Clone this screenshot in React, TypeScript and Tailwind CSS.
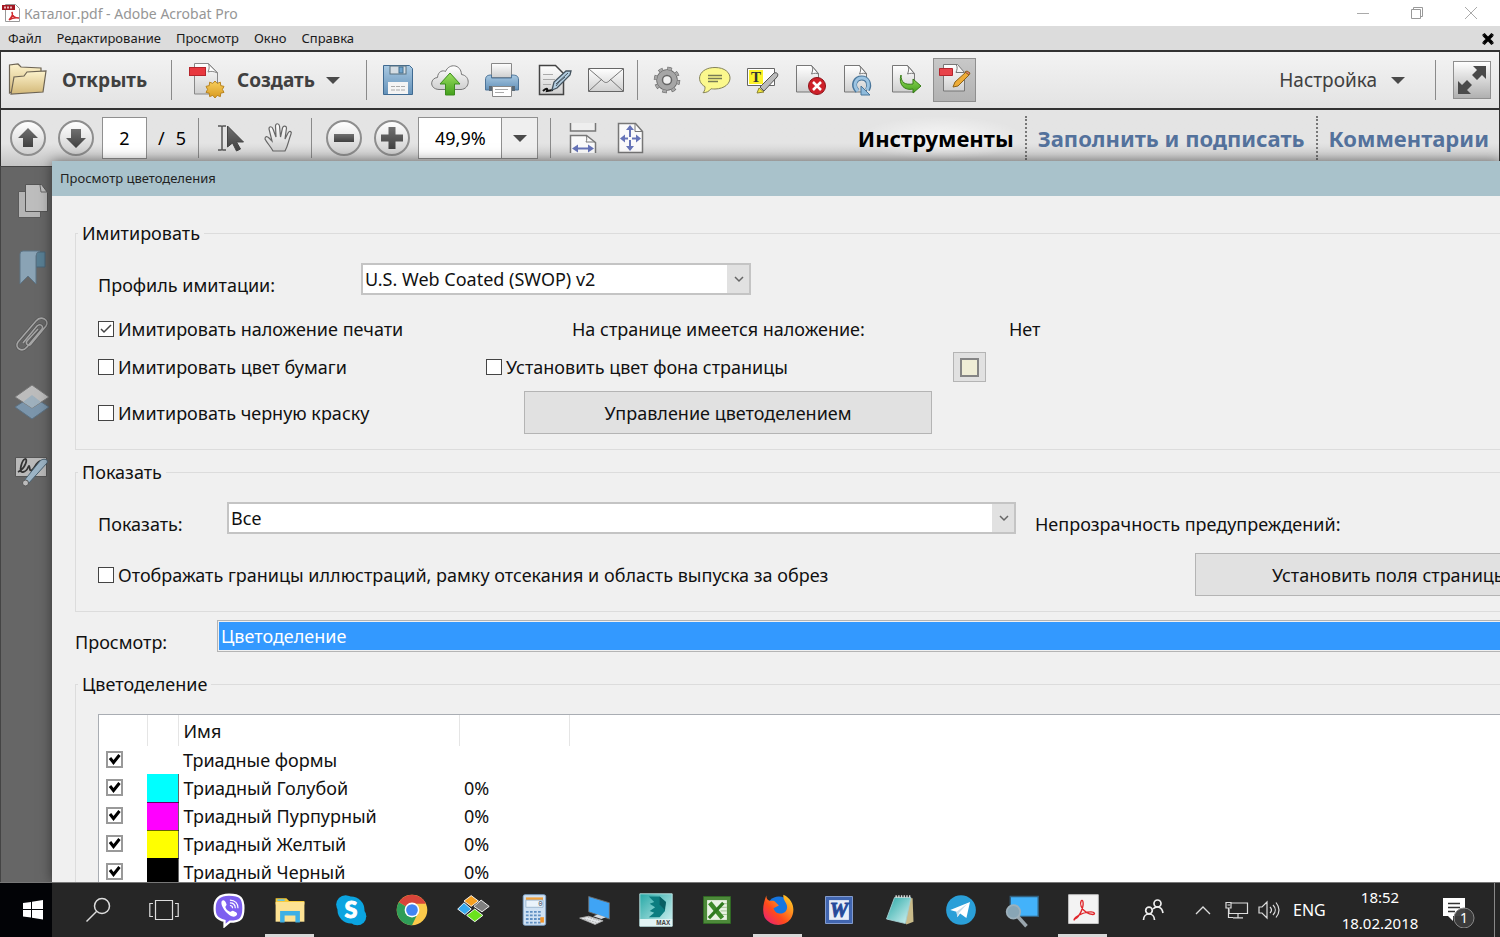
import React, { useState } from 'react';
import clsx from 'clsx';

const menuItems = ['Файл', 'Редактирование', 'Просмотр', 'Окно', 'Справка'];

const plates = [
  { name: 'Триадные формы', color: '', value: '' },
  { name: 'Триадный Голубой', color: 'bg-[#00ffff]', value: '0%' },
  { name: 'Триадный Пурпурный', color: 'bg-[#ff00ff]', value: '0%' },
  { name: 'Триадный Желтый', color: 'bg-[#ffff00]', value: '0%' },
  { name: 'Триадный Черный', color: 'bg-black', value: '0%' }
];

interface IconProps {
  size?: number;
  children: React.ReactNode;
}

// Every icon is drawn on a 40x40 grid
function Icon({ size = 40, children }: IconProps) {
  return (
    <svg width={size} height={size} viewBox="0 0 40 40" fill="none" className="shrink-0" aria-hidden="true">
      {children}
    </svg>
  );
}

function Gradients() {
  return (
    <svg width="0" height="0" className="absolute" aria-hidden="true">
      <defs>
        <linearGradient id="paper" x1="0" y1="0" x2="0" y2="1">
          <stop offset="0" stopColor="#ffffff" />
          <stop offset="1" stopColor="#cfcfcf" />
        </linearGradient>
        <linearGradient id="folder" x1="0" y1="0" x2="0" y2="1">
          <stop offset="0" stopColor="#fdf3cd" />
          <stop offset="1" stopColor="#d3b878" />
        </linearGradient>
        <linearGradient id="blue" x1="0" y1="0" x2="0" y2="1">
          <stop offset="0" stopColor="#a9c9e2" />
          <stop offset="1" stopColor="#6391b9" />
        </linearGradient>
        <linearGradient id="green" x1="0" y1="0" x2="0" y2="1">
          <stop offset="0" stopColor="#9be060" />
          <stop offset="1" stopColor="#44a01c" />
        </linearGradient>
        <linearGradient id="dark" x1="0" y1="0" x2="0" y2="1">
          <stop offset="0" stopColor="#707070" />
          <stop offset="1" stopColor="#404040" />
        </linearGradient>
        <linearGradient id="gold" x1="0" y1="0" x2="0" y2="1">
          <stop offset="0" stopColor="#f8cf5c" />
          <stop offset="1" stopColor="#d89a20" />
        </linearGradient>
        <linearGradient id="fire" x1="0" y1="1" x2="1" y2="0">
          <stop offset="0" stopColor="#e3168c" />
          <stop offset="0.4" stopColor="#ff4a1c" />
          <stop offset="1" stopColor="#ffe226" />
        </linearGradient>
        <linearGradient id="teal" x1="0" y1="0" x2="1" y2="1">
          <stop offset="0" stopColor="#26a8a6" />
          <stop offset="1" stopColor="#d8f4f4" />
        </linearGradient>
      </defs>
    </svg>
  );
}

function PageShape() {
  return (
    <>
      <path d="M5.500 5.500h15l7 8v18.500h-22z" fill="url(#paper)" stroke="#777" />
      <path d="M20.500 5.500c2 3 1 6 0 8.500 3-1 5-1 7 0z" fill="#fff" stroke="#777" />
    </>
  );
}

const FolderIcon = () => (
  <Icon>
    <path d="M1.500 33V5L10 4l3 3 20 1v8z" fill="url(#folder)" stroke="#6d6454" strokeWidth="1.200" />
    <path d="M3 34 6 17l10-1 3-4 19-1-3 21z" fill="url(#folder)" stroke="#6d6454" strokeWidth="1.200" />
  </Icon>
);

const CreateIcon = () => (
  <Icon>
    <path d="M8.500 3.500h14l9 9v21.500h-23z" fill="url(#paper)" stroke="#888" />
    <path d="M22 3.500c2 3 1 6 0 8.500 3-1 5-1 9.500 1z" fill="#fff" stroke="#888" />
    <rect x="3.500" y="7.500" width="16" height="8" fill="#e8383f" stroke="#b5262d" />
    <path d="m29 21 2.200 2.400 3.200-1.200.3 3.400 3.300.8-1.600 3 1.600 3-3.300.8-.3 3.400-3.200-1.200L29 38l-2.200-2.600-3.200 1.200-.3-3.400-3.300-.8 1.600-3-1.600-3 3.300-.8.3-3.400 3.200 1.200z" fill="url(#gold)" stroke="#b98522" />
  </Icon>
);

const SaveIcon = () => (
  <Icon>
    <path d="M5.500 5.500h26l3 3v26h-29z" fill="url(#blue)" stroke="#3f6a91" />
    <rect x="12" y="6" width="16" height="8" fill="#d5dde3" stroke="#59707f" />
    <rect x="21" y="7" width="4" height="6" fill="#6fa4ce" stroke="#44708f" />
    <rect x="10" y="22" width="20" height="12" fill="#f4f4f4" />
    <path d="M13 26.500h14M13 30h14" stroke="#aaa" strokeDasharray="4 1" />
  </Icon>
);

const CloudIcon = () => (
  <Icon>
    <path d="M9 29.500C-1 29 0 18 7.500 17.500 8 11 13 10 15.500 11.500 19 3 31 4 31.500 14.500 41 16 40 29 31 29.500z" fill="url(#paper)" stroke="#777" />
    <path d="m20 13 10 11h-5.500v11h-9V24H10z" fill="url(#green)" stroke="#3c8c1e" />
  </Icon>
);

const PrinterIcon = () => (
  <Icon>
    <path d="M9.500 3.500h20v14h-20z" fill="url(#paper)" stroke="#888" />
    <path d="M3.500 20c0-4 2-5 6-5v3h20v-3c5 0 7 1 7 5v10h-33z" fill="url(#blue)" stroke="#4e7599" />
    <path d="M7 26h26v5H7z" fill="#5b6a76" />
    <path d="M10.500 26.500h19v10h-19z" fill="#fff" stroke="#888" />
    <path d="M13 29.500h13M13 32.500h9" stroke="#aaa" />
  </Icon>
);

const SignIcon = () => (
  <Icon>
    <path d="M5.500 5.500h16l8 8v21h-24z" fill="url(#paper)" stroke="#444" strokeWidth="1.500" />
    <path d="M9 14.500h10M9 19.500h12M9 24.500h8" stroke="#aaa" />
    <path d="M9 31c3-3 5-3 4 0l6-1" stroke="#111" strokeWidth="2" />
    <path d="m18 30 2-8L32 11h5l-1 4-13 13z" fill="#b5cfe2" stroke="#44535e" strokeWidth="1.300" />
    <path d="m22 24 12-11M22 26l3-4 6-5" stroke="#44535e" />
  </Icon>
);

const MailIcon = () => (
  <Icon>
    <path d="M2.500 8.500h35v23h-35z" fill="url(#paper)" stroke="#666" />
    <path d="m3 31 13-12M37 31 24 19M3 9l14 12c2 2 4 2 6 0L37 9" stroke="#777" />
  </Icon>
);

const GearIcon = () => (
  <Icon>
    <circle cx="20" cy="20" r="11.500" stroke="#666" strokeWidth="3.500" strokeDasharray="4.500 4.530" />
    <circle cx="20" cy="20" r="8" stroke="#666" strokeWidth="5.500" />
    <circle cx="20" cy="20" r="11.500" stroke="#a6a6a6" strokeWidth="2.500" strokeDasharray="3.500 5.530" strokeDashoffset="-.5" />
    <circle cx="20" cy="20" r="7.500" stroke="#a6a6a6" strokeWidth="5" />
    <circle cx="20" cy="20" r="4.500" fill="#f0f0f0" stroke="#666" strokeWidth="1.500" />
  </Icon>
);

const CommentIcon = () => (
  <Icon>
    <path d="M20 7.500c20 0 20 21 0 21.500-2 0-3 0-4-.3-2 3-5 4-8 4 2-2 2-4 2-6C0 21 4 7.500 20 7.500z" fill="#fbf88d" stroke="#85835a" />
    <path d="M13 15.500h14M13 18.500h14M13 21.500h10" stroke="#777b55" strokeWidth="1.300" />
  </Icon>
);

const HighlightIcon = () => (
  <Icon>
    <path d="M4.500 8.500h27v17h-27z" fill="#fff" stroke="#666" />
    <path d="M6 10h14v14H6z" fill="#fdf32a" />
    <text x="13" y="22" textAnchor="middle" fontSize="15" fontWeight="bold" fontFamily="Liberation Serif, serif" fill="#333">T</text>
    <path d="M17 27 31 13c3-1 5 1 3 4L21 31z" fill="#bbb" stroke="#555" />
    <path d="m16 28 5 4-7 1z" fill="#f2e63c" stroke="#8b8432" />
  </Icon>
);

const DeletePageIcon = () => (
  <Icon>
    <PageShape />
    <circle cx="26" cy="26" r="8.500" fill="#ce2029" stroke="#8e1218" />
    <path d="m22 22 8 8m0-8-8 8" stroke="#fff" strokeWidth="2.500" />
  </Icon>
);

const RotatePageIcon = () => (
  <Icon>
    <PageShape />
    <path d="M18.500 31c-6-6-2-13 4-13s9 6 6 12" stroke="#49769b" strokeWidth="5" />
    <path d="M22 26v9h9z" fill="#8fbbdc" stroke="#49769b" />
    <path d="M19 31c-6-6-2-13 4-13s8 6 5 12" stroke="#9cc4e2" strokeWidth="3" />
  </Icon>
);

const ExtractPageIcon = () => (
  <Icon>
    <PageShape />
    <path d="M14 15c0 8 4 10 12 9v-5l8 7-8 7v-4c-8 2-15-4-12-14z" fill="url(#green)" stroke="#377d17" />
  </Icon>
);

const EditPdfIcon = () => (
  <Icon>
    <path d="M8.500 4.500h14l7 8v18.500h-21z" fill="url(#paper)" stroke="#777" />
    <path d="M21 4.500c2 3 1 5 0 8h8" stroke="#777" />
    <path d="M4.500 8.500h13v7h-13z" fill="#e8434a" stroke="#b5262d" />
    <path d="m18 27 2-5L31 12l3 3-11 11z" fill="#eeac36" stroke="#8c6218" />
    <path d="m30 12 2-1 3 2-1 2z" fill="#e77a72" stroke="#8c6218" />
  </Icon>
);

const CursorIcon = () => (
  <Icon>
    <path d="M7 8h3q1 0 1 1V31q0 1-1 1H7M15 8h-3q-1 0-1 1M15 32h-3q-1 0-1-1" stroke="#555" strokeWidth="1.500" />
    <path d="M16.500 8v21l5-4 4 8 4-2-4-7h7z" fill="url(#dark)" stroke="#444" />
  </Icon>
);

const HandIcon = () => (
  <Icon>
    <path d="M14 33c-2-4-6-8-8-12 0-3 2-3 4-1l3 3-3-12c0-3 3-3 4 0l3 8-.5-11c0-3 3.500-3 4 0l1 11 2-9c1-3 4-2 4 0l-1.500 11 3-6c2-3 4-1 3 1-3 8-3 12-6 17z" fill="url(#paper)" stroke="#666" strokeWidth="1.200" />
  </Icon>
);

const FitWidthIcon = () => (
  <Icon>
    <path d="M7.500 5v8h25V5" fill="#eee" stroke="#777" strokeWidth="1.500" />
    <path d="M7.500 35V17.500h16l9 7V35" fill="#fafafa" stroke="#777" strokeWidth="1.500" />
    <path d="M23 17c1 3 1 5 0 7h9" stroke="#777" />
    <path d="M12 30.500h16" stroke="#6674b8" strokeWidth="2" />
    <path d="m9 30.500 6-4v8zm22 0-6-4v8z" fill="#6674b8" />
  </Icon>
);

const FitPageIcon = () => (
  <Icon>
    <path d="M7.500 5.500h17l7 8v21h-24z" fill="#fafafa" stroke="#777" strokeWidth="1.500" />
    <path d="M24 5.500v8h7" stroke="#777" />
    <path d="M19 11v18M12 20.500h15" stroke="#6674b8" strokeWidth="2" />
    <path d="m19 7 4 5h-8zm0 26 4-5h-8zM9 20.500l5-4v8zm21 0-5-4v8z" fill="#6674b8" />
    <path d="M17 19h4v3h-4z" fill="#fafafa" />
  </Icon>
);

const PagesIcon = () => (
  <Icon>
    <path d="M6.500 10.500h22v26h-22z" fill="#b4b4b4" stroke="#5a5a5a" />
    <path d="M13.500 3.500h16l6 8v19h-22z" fill="#bdbdbd" stroke="#555" />
    <path d="m28 4 1 7h6" stroke="#666" />
  </Icon>
);

const BookmarkIcon = () => (
  <Icon>
    <path d="M24 4h9v15h-9z" fill="#587e93" stroke="#496577" />
    <path d="M8 36V6q0-3 3-3h17q-4 1-4 5v28l-8-8z" fill="#8aa3b5" stroke="#5d7485" />
  </Icon>
);

const ClipIcon = () => (
  <Icon>
    <path d="M11 28 25 11c3-3 7 0 5 3L15 32c-5 6-13 1-9-5L24 6c5-6 14-1 10 5L19 29c-2 3-6 0-4-3l11-12" stroke="#555" strokeWidth="2.800" />
    <path d="M11 28 25 11c3-3 7 0 5 3L15 32c-5 6-13 1-9-5L24 6c5-6 14-1 10 5L19 29c-2 3-6 0-4-3l11-12" stroke="#a5a5a5" strokeWidth="1.500" />
  </Icon>
);

const LayersIcon = () => (
  <Icon>
    <path d="m20 14 17 11-17 12L3 25z" fill="#7b95ab" stroke="#5b7183" />
    <path d="m20 3 17 12-17 11L3 15z" fill="#bcbcbc" stroke="#777" />
    <path d="m20 13 9 7-9 6-9-6z" fill="#9eb0bd" />
  </Icon>
);

const SignaturePanelIcon = () => (
  <Icon>
    <path d="M3.500 8.500h31v19h-31z" fill="#b9b9b9" stroke="#555" />
    <path d="M6 23c8-4 10-14 7-13s-7 14-2 13 5-6 6-6 0 6 3 4 4-8 9-9" stroke="#333" strokeWidth="1.800" />
    <path d="m11 33 17-21c3-3 9-2 7 2L16 35z" fill="#9cb4c5" stroke="#49606f" />
    <circle cx="13.500" cy="34" r="3" fill="#bbb" stroke="#555" />
  </Icon>
);

const AcrobatDocIcon = () => (
  <svg width="20" height="20" viewBox="0 0 20 20" fill="none" className="shrink-0" aria-hidden="true">
    <path d="M4.500 1.500h10l4 4v13h-14z" fill="#fff" stroke="#999" />
    <path d="M1 2h13v5H1z" fill="#a31621" />
    <path d="M3 4.500h8" stroke="#e9b8bb" strokeWidth="2" strokeDasharray="2 1" />
    <path d="M8 17c3-3 4-6 3-8 0 4 2 6 7 6-4-1-7 0-10 2z" stroke="#d02a2e" strokeWidth="1.500" />
  </svg>
);

function CheckBox({ id, checked = false, bold = false, label }: { id: string; checked?: boolean; bold?: boolean; label?: string }) {
  const [on, setOn] = useState(checked);
  return (
    <span className="relative inline-flex shrink-0">
      <input
        id={id}
        type="checkbox"
        aria-label={label}
        checked={on}
        onChange={() => setOn(!on)}
        className={clsx('appearance-none bg-white', bold ? 'w-[17px] h-[17px] border-2 border-[#999]' : 'w-4 h-4 border border-[#444]')}
      />
      {on && (
        <svg width="16" height="16" viewBox="0 0 16 16" fill="none" className="absolute inset-0 pointer-events-none" aria-hidden="true">
          <path d={bold ? 'm4 7 3.500 4.500L13.500 4' : 'm3 8 3 3 7-7'} stroke={bold ? '#000' : '#444'} strokeWidth={bold ? 3 : 1.5} />
        </svg>
      )}
    </span>
  );
}

function LabeledCheck({ id, label, checked, className }: { id: string; label: string; checked?: boolean; className?: string }) {
  return (
    <span className={clsx('flex items-center gap-1 shrink-0', className)}>
      <CheckBox id={id} checked={checked} />
      <label htmlFor={id}>{label}</label>
    </span>
  );
}

function Combo({ id, value, className }: { id: string; value: string; className: string }) {
  return (
    <span className={clsx('flex relative shrink-0 h-8', className)}>
      <select id={id} className="appearance-none w-full bg-white border-2 border-[#c4c4c4] px-0.5 outline-none">
        <option>{value}</option>
      </select>
      <svg viewBox="0 0 22 28" className="absolute right-0.5 top-0.5 w-[22px] h-7 bg-[#e1e1e1] pointer-events-none" fill="none" aria-hidden="true">
        <path d="m8 12 4 4 4-4" stroke="#666" strokeWidth="1.500" />
      </svg>
    </span>
  );
}

function ToolButton({ title, className, children }: { title: string; className?: string; children: React.ReactNode }) {
  return (
    <button title={title} className={clsx('flex items-center justify-center shrink-0', className)}>
      {children}
    </button>
  );
}

const Separator = ({ className }: { className?: string }) => <div className={clsx('w-px h-10 bg-[#8a8a8a] shrink-0', className)} />;

const Caret = () => <span className="border-x-[7px] border-t-[7px] border-x-transparent border-t-[#4a4a4a]" />;

function TitleBar() {
  return (
    <header className="flex items-center h-[26px] bg-white text-[#969696] text-sm shrink-0">
      <div className="pl-px">
        <AcrobatDocIcon />
      </div>
      <h1 className="pl-[3px] pt-px grow">Каталог.pdf - Adobe Acrobat Pro</h1>
      <svg width="14" height="14" viewBox="0 0 14 14" stroke="#aaa" fill="none" aria-hidden="true">
        <path d="M1 7.500h12" />
      </svg>
      <svg width="14" height="14" viewBox="0 0 14 14" stroke="#999" fill="none" className="mx-10" aria-hidden="true">
        <path d="M1.500 3.500h9v9h-9zM3.500 3.500v-2h9v9h-2" />
      </svg>
      <svg width="14" height="14" viewBox="0 0 14 14" stroke="#aaa" fill="none" className="mr-[22px]" aria-hidden="true">
        <path d="m1 1 12 12M13 1 1 13" />
      </svg>
    </header>
  );
}

function MenuBar() {
  return (
    <nav className="flex items-center h-6 bg-[#dcdcdc] text-[13px] text-[#1a1a1a] pt-0.5 px-2 gap-[15px] shrink-0">
      {menuItems.map((item) => (
        <button key={item}>{item}</button>
      ))}
      <button title="Закрыть" className="ml-auto -mr-[3px]">
        <svg width="14" height="14" viewBox="0 0 14 14" aria-hidden="true">
          <path d="m3 3 8 8m0-8-8 8" stroke="#000" strokeWidth="3.500" />
          <path d="M1.500 3.500 4 1.500M10 1.500l2.500 2M1.500 10.500l2.500 2M10 12.500l2.500-2" stroke="#000" strokeWidth="1.500" />
        </svg>
      </button>
    </nav>
  );
}

function MainToolbar() {
  return (
    <div className="flex items-center h-[58px] border-t-2 border-x border-[#333] bg-linear-to-b from-[#f3f3f3] to-[#e3e3e3] shrink-0 text-[19px] text-[#404040]">
      <button className="flex items-center pl-[7px] w-[170px] shrink-0 font-bold gap-[14px]">
        <FolderIcon />
        Открыть
      </button>
      <Separator />
      <button className="flex items-center pl-3.5 w-[194px] shrink-0 font-bold gap-[11px]">
        <CreateIcon />
        Создать
        <Caret />
      </button>
      <Separator className="mr-[5px]" />
      <ToolButton title="Сохранить" className="w-[52px]"><SaveIcon /></ToolButton>
      <ToolButton title="Отправить в облако" className="w-[52px]"><CloudIcon /></ToolButton>
      <ToolButton title="Печать" className="w-[52px]"><PrinterIcon /></ToolButton>
      <ToolButton title="Подписать" className="w-[52px]"><SignIcon /></ToolButton>
      <ToolButton title="Почта" className="w-[52px]"><MailIcon /></ToolButton>
      <Separator className="mx-[5px]" />
      <ToolButton title="Параметры" className="w-12"><GearIcon /></ToolButton>
      <ToolButton title="Заметка" className="w-12"><CommentIcon /></ToolButton>
      <ToolButton title="Выделить текст" className="w-12"><HighlightIcon /></ToolButton>
      <ToolButton title="Удалить страницу" className="w-12"><DeletePageIcon /></ToolButton>
      <ToolButton title="Повернуть страницу" className="w-12"><RotatePageIcon /></ToolButton>
      <ToolButton title="Извлечь страницу" className="w-12"><ExtractPageIcon /></ToolButton>
      <ToolButton title="Редактировать" className="w-[43px] h-11 ml-0.5 bg-linear-to-b from-[#c8c8c8] to-[#b2b2b2] border border-[#8f8f8f]"><EditPdfIcon /></ToolButton>
      <button className="flex items-center gap-3.5 ml-auto mr-[30px] shrink-0">
        Настройка
        <Caret />
      </button>
      <Separator />
      <ToolButton title="Во весь экран" className="ml-[17px] mr-2 w-[38px] h-[38px] border border-[#8f8f8f] bg-linear-to-b from-white to-[#b0b0b0]">
        <svg width="34" height="34" viewBox="0 0 34 34" fill="#4a4a4a" aria-hidden="true">
          <path d="M31 3v13l-4-4-5 5-5-5 5-5-4-4zM3 31V18l4 4 5-5 5 5-5 5 4 4z" />
        </svg>
      </ToolButton>
    </div>
  );
}

function RoundButton({ title, path }: { title: string; path: string }) {
  return (
    <button title={title} className="flex items-center justify-center w-9 h-9 rounded-full border-2 border-[#8e8e8e] bg-linear-to-b from-white to-[#cfcfcf] shrink-0">
      <svg width="32" height="32" viewBox="0 0 32 32" fill="url(#dark)" aria-hidden="true">
        <path d={path} />
      </svg>
    </button>
  );
}

function PageToolbar() {
  return (
    <div className="flex items-center h-[58px] border-t-2 border-x border-[#333] bg-linear-to-b from-[#e4e4e4] from-60% to-[#c4c4c4] shrink-0 text-lg">
      <div className="flex items-center pl-[9px] gap-3 shrink-0">
        <RoundButton title="Предыдущая страница" path="m16 6 10 10h-5v9H11v-9H6z" />
        <RoundButton title="Следующая страница" path="m16 26 10-10h-5V7H11v9H6z" />
      </div>
      <input aria-label="Страница" defaultValue="2" className="ml-2 w-[45px] h-[42px] bg-white border border-[#909090] text-center shrink-0" />
      <span className="flex gap-[11px] w-[51px] pl-[11px] shrink-0">
        <span>/</span>
        <span>5</span>
      </span>
      <Separator className="mr-3" />
      <ToolButton title="Выделение" className="w-10"><CursorIcon /></ToolButton>
      <ToolButton title="Рука" className="ml-2 w-10"><HandIcon /></ToolButton>
      <Separator className="ml-3 mr-[14px]" />
      <div className="flex items-center gap-3 shrink-0">
        <RoundButton title="Уменьшить" path="M6 12h20v8H6z" />
        <RoundButton title="Увеличить" path="M12.500 5h7v7.500H27v7h-7.500V27h-7v-7.500H5v-7h7.500z" />
      </div>
      <div className="relative flex ml-2 shrink-0">
        <select aria-label="Масштаб" className="appearance-none w-[120px] h-[42px] bg-white border border-[#909090] pl-4">
          <option>49,9%</option>
        </select>
        <span className="absolute right-px inset-y-px w-9 flex items-center justify-center border-l border-[#909090] bg-[#efefef] pointer-events-none">
          <Caret />
        </span>
      </div>
      <Separator className="mx-3" />
      <ToolButton title="По ширине" className="w-10"><FitWidthIcon /></ToolButton>
      <ToolButton title="По странице" className="ml-2 w-10"><FitPageIcon /></ToolButton>
      <div className="flex items-center ml-auto pr-[10px] text-[22px] font-bold text-[#54729c] shrink-0">
        <button className="pr-[11px] h-11 text-black bg-radial from-white/70 to-transparent to-70%">Инструменты</button>
        <button className="px-[11px] h-11 border-l-2 border-dotted border-[#777]">Заполнить и подписать</button>
        <button className="pl-[11px] h-11 border-l-2 border-dotted border-[#777]">Комментарии</button>
      </div>
    </div>
  );
}

function SidePanel() {
  return (
    <aside className="flex flex-col w-[52px] bg-[#666] border-t border-l border-[#444] shrink-0 pl-[11px]">
      <ToolButton title="Страницы" className="w-10 h-[67px]"><PagesIcon /></ToolButton>
      <ToolButton title="Закладки" className="w-10 h-[67px]"><BookmarkIcon /></ToolButton>
      <ToolButton title="Вложения" className="w-10 h-[67px]"><ClipIcon /></ToolButton>
      <ToolButton title="Слои" className="w-10 h-[67px]"><LayersIcon /></ToolButton>
      <ToolButton title="Подписи" className="w-10 h-[67px]"><SignaturePanelIcon /></ToolButton>
    </aside>
  );
}

function SimulateGroup() {
  return (
    <fieldset className="border border-r-0 border-[#dcdcdc] pl-[22px] pb-[15px]">
      <legend className="-ml-5 px-1 leading-6">Имитировать</legend>
      <div className="flex items-end mt-[18px]">
        <label htmlFor="profile" className="w-[263px] leading-5 shrink-0">Профиль имитации:</label>
        <Combo id="profile" value="U.S. Web Coated (SWOP) v2" className="w-[390px]" />
      </div>
      <div className="flex items-center h-6 mt-[22px]">
        <LabeledCheck id="overprint" label="Имитировать наложение печати" checked className="w-[474px]" />
        <span className="w-[437px] shrink-0">На странице имеется наложение:</span>
        <span>Нет</span>
      </div>
      <div className="flex items-center mt-[11px]">
        <LabeledCheck id="paper-color" label="Имитировать цвет бумаги" className="w-[388px]" />
        <LabeledCheck id="page-color" label="Установить цвет фона страницы" className="w-[467px]" />
        <button title="Цвет фона" className="flex items-center justify-center w-[33px] h-[30px] bg-[#e1e1e1] border border-[#b4b4b4] shrink-0">
          <span className="w-[19px] h-[19px] bg-[#efedd6] border-2 border-[#858585]" />
        </button>
      </div>
      <div className="flex items-center mt-[9px]">
        <LabeledCheck id="black-ink" label="Имитировать черную краску" className="w-[426px]" />
        <button className="w-[408px] h-[43px] bg-[#e1e1e1] border border-[#b4b4b4] shrink-0">Управление цветоделением</button>
      </div>
    </fieldset>
  );
}

function ShowGroup() {
  return (
    <fieldset className="border border-r-0 border-[#dcdcdc] pl-[22px] pb-[15px] mt-[10px]">
      <legend className="-ml-5 px-1 leading-6">Показать</legend>
      <div className="flex items-end mt-[18px]">
        <label htmlFor="show" className="w-[129px] leading-5 shrink-0">Показать:</label>
        <Combo id="show" value="Все" className="w-[789px]" />
        <span className="pl-[19px] leading-5 whitespace-nowrap">Непрозрачность предупреждений:</span>
      </div>
      <div className="flex items-center mt-[19px]">
        <LabeledCheck id="art-box" label="Отображать границы иллюстраций, рамку отсекания и область выпуска за обрез" className="w-[1097px]" />
        <button className="w-[404px] h-[43px] bg-[#e1e1e1] border border-[#b4b4b4] shrink-0">Установить поля страницы...</button>
      </div>
    </fieldset>
  );
}

function PlatesGroup() {
  return (
    <fieldset className="border border-r-0 border-[#dcdcdc] pl-[22px] mt-5">
      <legend className="-ml-5 px-1 leading-6">Цветоделение</legend>
      <div className="bg-white border border-[#a9adb3] mt-[18px]">
        <table className="w-full table-fixed text-left">
          <thead>
            <tr className="h-[31px]">
              <th className="w-12 border-r border-[#e5e5e5]" />
              <th className="w-[31px] border-r border-[#e5e5e5]" />
              <th className="w-[281px] border-r border-[#e5e5e5] pl-[5px] font-normal">Имя</th>
              <th className="w-[110px] border-r border-[#e5e5e5]" />
              <th />
            </tr>
          </thead>
          <tbody>
            {plates.map((plate) => (
              <tr key={plate.name} className="h-7 leading-7">
                <td className="pl-[7px]">
                  <span className="flex pb-0.5"><CheckBox id={plate.name} label={plate.name} checked bold /></span>
                </td>
                <td className={clsx(plate.color, plate.color && 'border-r border-b border-black/60')} />
                <td className="pl-[5px]">{plate.name}</td>
                <td className="pl-[5px]">{plate.value}</td>
                <td />
              </tr>
            ))}
          </tbody>
        </table>
      </div>
    </fieldset>
  );
}

function SeparationsDialog() {
  return (
    <main className="relative grow min-w-0 -mt-[5px] bg-[#f0f0f0] shadow-[0_0_12px_rgba(0,0,0,0.5)] overflow-hidden text-lg text-[#111]">
      <h2 className="flex items-center h-[35px] pl-2 bg-[#a9c2cb] text-[13px] text-[#222]">Просмотр цветоделения</h2>
      <div className="pl-[23px] pt-[25px] w-[1700px]">
        <SimulateGroup />
        <ShowGroup />
        <div className="flex items-end mt-2">
          <label htmlFor="preview" className="w-[142px] leading-5 shrink-0">Просмотр:</label>
          <span className="flex grow border border-[#b4b4b4] bg-[#f0f0f0] h-8 p-px">
            <select id="preview" className="appearance-none w-full bg-[#3399ff] text-white pl-0.5">
              <option>Цветоделение</option>
            </select>
          </span>
        </div>
        <PlatesGroup />
      </div>
    </main>
  );
}

const taskbarApps = [
  {
    name: 'Viber',
    icon: (
      <>
        <path d="M20 3c13 0 16 4 16 15s-3 15-15 15l-6 5v-6C6 30 4 26 4 18S7 3 20 3z" fill="#7d5ff0" stroke="#fff" strokeWidth="2.500" />
        <path d="M12 10c2-2 4 0 5 3 1 2-1 2-1 4 1 3 3 4 5 5 2 0 2-2 4-1 5 2 5 4 2 6-5 3-18-11-15-17z" fill="#fff" />
        <path d="M21 9c6 0 9 4 9 9M21 12c4 0 6 2 6 6M21 15c2 0 3 1 3 3" stroke="#fff" strokeWidth="1.300" />
      </>
    )
  },
  {
    name: 'Проводник',
    open: true,
    icon: (
      <>
        <path d="M4 7h12l3 3h17v4H4z" fill="#f6c935" />
        <path d="M4 11h32v22H4z" fill="#fde293" />
        <path d="M6 8h8v2H6z" fill="#6fc5d8" />
        <path d="M9 34V21h22v13h-5v-8H14v8z" fill="#3fb0e5" />
      </>
    )
  },
  {
    name: 'Skype',
    icon: (
      <>
        <circle cx="14" cy="14" r="10.500" fill="#0ba4e0" />
        <circle cx="27" cy="27" r="10" fill="#0ba4e0" />
        <circle cx="20" cy="20" r="15" fill="#0ba4e0" />
        <text x="20" y="29" textAnchor="middle" fontSize="26" fontWeight="900" stroke="#fff" fontFamily="Lato, sans-serif" fill="#fff">S</text>
      </>
    )
  },
  {
    name: 'Chrome',
    icon: (
      <>
        <circle cx="20" cy="20" r="17" fill="#fbc94a" />
        <path d="M20 20 5.300 11.500A17 17 0 0 1 34.700 11.500L35 13H20z" fill="#d8453a" />
        <path d="M5.300 11.500A17 17 0 0 0 20 37l6.500-13.500L20 20z" fill="#2f9d58" />
        <circle cx="20" cy="20" r="8.200" fill="#fff" />
        <circle cx="20" cy="20" r="6.500" fill="#4285f4" />
      </>
    )
  },
  {
    name: 'Total Commander',
    icon: (
      <>
        <path d="m18 4 8 6-8 6-8-6z" fill="#f5a021" stroke="#fff" />
        <path d="m29 9 9 7-8 6-9-6z" fill="#808080" stroke="#fff" />
        <path d="m10 12 8 7-7 6-8-6z" fill="#36a9ee" stroke="#fff" />
        <path d="m22 19 9 7-9 7-9-7z" fill="#6be21c" stroke="#fff" />
      </>
    )
  },
  {
    name: 'Калькулятор',
    icon: (
      <>
        <rect x="8" y="3" width="25" height="34" rx="2" fill="#cfe1f3" stroke="#7ea3c8" />
        <path d="M11 6h19v3H11z" fill="#f0a13c" />
        <path d="M11 9h19v8H11z" fill="#eaf3fb" stroke="#9ab5cf" />
        <text x="27" y="16" textAnchor="middle" fontSize="8" fontFamily="Liberation Mono, monospace" fill="#345">0</text>
        <path d="M11 22h17M11 26h17M11 30h17M11 34h17" stroke="#5f8fc2" strokeWidth="2" strokeDasharray="3 1.500" />
        <path d="M27 28h4v6h-4z" fill="#f0942a" />
      </>
    )
  },
  {
    name: 'Компьютер',
    icon: (
      <>
        <path d="m13 5 23 7v18l-23-8z" fill="#3fa4f5" stroke="#6b6b6b" />
        <path d="m18 27 5-2 9 3-5 2z" fill="#d5dbe0" />
        <path d="m3 29 10-2 16 5-9 4z" fill="#e4e8eb" stroke="#aaa" />
        <path d="m8 30 14 4M12 28l13 4" stroke="#aaa" strokeDasharray="2 1" />
      </>
    )
  },
  {
    name: '3ds Max',
    icon: (
      <>
        <path d="M2 2h36v36H2z" fill="url(#teal)" stroke="#bde5e5" />
        <path d="M2 30h36v8H2z" fill="#e2f3f3" />
        <path d="M12 5h12l7 6-1 6v4l-6 7H12l6-5-5-2 6-4-6-4 5-2z" fill="#0c7d80" />
        <path d="m24 5 7 6-1 9-6-6z" fill="#075f63" />
        <text x="28" y="37" textAnchor="middle" fontSize="7" fontWeight="bold" fontFamily="Liberation Sans, sans-serif" fill="#444">MAX</text>
      </>
    )
  },
  {
    name: 'Excel',
    icon: (
      <>
        <path d="M5 5h30v30H5z" fill="#4d8a3a" stroke="#2f6a22" />
        <path d="M9 9h22v22H9z" fill="#e9f3e4" />
        <path d="M24 13h7M24 17h7M24 21h7M24 25h7" stroke="#9bc08c" />
        <path d="m12 12 14 17" stroke="#3d8a2a" strokeWidth="5" />
        <path d="M27 12 11 29" stroke="#2f7a20" strokeWidth="3.500" />
      </>
    )
  },
  {
    name: 'Firefox',
    open: true,
    icon: (
      <>
        <circle cx="21" cy="19" r="14" fill="#1676e0" />
        <path d="M7 4c0 3 1 5 4 6 3-1 6 0 6 1l4 4-6 3c3 9 14 7 15 0 1-6-5-8-4-15 13 6 13 20 8 27-8 10-23 8-29-2C2 20 4 12 7 4z" fill="url(#fire)" />
      </>
    )
  },
  {
    name: 'Word',
    icon: (
      <>
        <path d="M5 5h30v30H5z" fill="#4166b0" stroke="#8ba5d8" />
        <path d="M9 9h22v22H9z" fill="#e8eef8" />
        <text x="20" y="28" textAnchor="middle" fontSize="23" fontWeight="bold" fontStyle="italic" stroke="#264a9a" fontFamily="Liberation Serif, serif" fill="#264a9a">W</text>
      </>
    )
  },
  {
    name: 'Блокнот',
    icon: (
      <>
        <path d="m15 5 19 2 1 26-8 3z" fill="#c9bb8a" />
        <path d="M14 6h18l-6 29L5 30z" fill="url(#teal)" stroke="#a5cfd2" />
        <path d="M15 5h17" stroke="#ddd" strokeWidth="3" strokeDasharray="1.500 1.500" />
      </>
    )
  },
  {
    name: 'Telegram',
    icon: (
      <>
        <circle cx="20" cy="20" r="16.500" fill="#2a9fd8" />
        <path d="M8 20 30 11l-4 18-7-5-3 4-1-6z" fill="#fff" />
        <path d="m15 22 12-9-9 10-2 5z" fill="#c5dcea" />
      </>
    )
  },
  {
    name: 'Лупа',
    icon: (
      <>
        <path d="M7 5h31v22H7z" fill="#43b2fa" stroke="#33607e" strokeWidth="1.500" />
        <path d="m15 27 10 11" stroke="#9aa6ad" strokeWidth="4" />
        <circle cx="10.500" cy="22" r="7.500" fill="#88a5b5" stroke="#9db0bb" strokeWidth="2" />
      </>
    )
  },
  {
    name: 'Acrobat',
    open: true,
    icon: (
      <>
        <path d="M4 3h33v32H4z" fill="#f3f3f3" stroke="#ccc" />
        <path d="M11 30c6-3 10-14 9-19-1-4-4 0-2 5s8 9 13 9c3 0 2-3-2-3-6 0-13 3-17 6-3 3-2 4-1 2z" stroke="#e0262b" strokeWidth="1.500" />
      </>
    )
  }
];

function Taskbar() {
  return (
    <footer className="relative flex items-stretch h-[55px] bg-[#262626] border-t border-[#777] text-white shrink-0">
      <button title="Пуск" className="flex items-center justify-center w-[52px] pl-3.5 bg-[#020306] shrink-0">
        <svg width="20" height="20" viewBox="0 0 20 20" fill="#fff" aria-hidden="true">
          <path d="M0 3l8-1v7H0zM9 1.800 20 0v9H9zM0 10h8v7.500l-8-1zM9 10h11v9.500L9 17.800z" />
        </svg>
      </button>
      <ToolButton title="Поиск" className="ml-[13px] w-[66px]">
        <svg width="26" height="26" viewBox="0 0 26 26" fill="none" stroke="#ddd" strokeWidth="1.500" aria-hidden="true">
          <circle cx="17" cy="9" r="7.500" />
          <path d="M11.500 14.500 1.500 24.500" />
        </svg>
      </ToolButton>
      <ToolButton title="Представление задач" className="w-[65px]">
        <svg width="30" height="22" viewBox="0 0 30 22" fill="none" stroke="#ddd" strokeWidth="1.200" aria-hidden="true">
          <path d="M6.500 1.500h17v19h-17zM4 4.500H.800v13H4M26 4.500h3.200v13H26" />
        </svg>
      </ToolButton>
      <div className="flex ml-0.5">
        {taskbarApps.map((app) => (
          <button key={app.name} title={app.name} className="relative flex items-center justify-center w-[61px] shrink-0">
            <Icon size={36}>{app.icon}</Icon>
            {app.open && <span className="absolute bottom-0 inset-x-1.5 h-[3px] bg-[#d8d8d8]" />}
          </button>
        ))}
      </div>
      <div className="flex items-center ml-auto shrink-0">
        <ToolButton title="Люди" className="w-6">
          <svg width="22" height="22" viewBox="0 0 22 22" fill="none" stroke="#eee" strokeWidth="1.700" aria-hidden="true">
            <circle cx="15.500" cy="4.500" r="3.500" />
            <circle cx="7" cy="11.500" r="3.300" />
            <path d="M1.500 21c0-8 11-8 11 0M11 10c4-4 9-2 10 4" />
          </svg>
        </ToolButton>
        <ToolButton title="Скрытые значки" className="ml-7 w-5">
          <svg width="16" height="10" viewBox="0 0 16 10" fill="none" stroke="#ddd" strokeWidth="1.300" aria-hidden="true">
            <path d="m1 9 7-7 7 7" />
          </svg>
        </ToolButton>
        <ToolButton title="Сеть" className="ml-3 w-6">
          <svg width="24" height="18" viewBox="0 0 24 18" fill="none" stroke="#ddd" strokeWidth="1.200" aria-hidden="true">
            <path d="M6 2h16.500v10.500H4V8M13 13v3.500M8 16.800h10M1 1.500h5V7H1zM3.500 7v9.500H8M2.500 4H5" />
          </svg>
        </ToolButton>
        <ToolButton title="Громкость" className="ml-2 w-6">
          <svg width="24" height="20" viewBox="0 0 24 20" fill="none" stroke="#ddd" strokeWidth="1.200" aria-hidden="true">
            <path d="M2 7h3l5-5v16l-5-5H2zM13 7c2 2 2 4 0 6M16 5c3 3 3 7 0 10M19 2.500c4 5 4 10 0 15" />
          </svg>
        </ToolButton>
        <span className="ml-3 w-9 text-base">ENG</span>
        <div className="w-[82px] ml-2.5 text-center text-[15px] leading-[26px]">
          <div>18:52</div>
          <div>18.02.2018</div>
        </div>
        <button title="Уведомления" className="relative ml-[21px] w-9 h-9">
          <svg width="36" height="36" viewBox="0 0 36 36" aria-hidden="true">
            <path d="M1 6h22v18H11v5l-5-5H1z" fill="#fff" />
            <path d="M6 11.500h12M6 15.500h12M6 19.500h7" stroke="#333" strokeWidth="1.300" />
            <circle cx="22" cy="26" r="10" fill="#3c3c3c" fillOpacity="0.95" stroke="#888" />
          </svg>
          <span className="absolute left-[18px] top-4 text-sm leading-5">1</span>
        </button>
        <span className="w-px h-[54px] ml-4 mr-[5px] bg-[#888]" />
      </div>
    </footer>
  );
}

function App() {
  return (
    <div className="flex flex-col h-screen overflow-hidden bg-[#666] font-['Noto_Sans','Open_Sans',sans-serif]">
      <Gradients />
      <TitleBar />
      <MenuBar />
      <MainToolbar />
      <PageToolbar />
      <div className="flex grow min-h-0">
        <SidePanel />
        <SeparationsDialog />
      </div>
      <Taskbar />
    </div>
  );
}

export default App;
